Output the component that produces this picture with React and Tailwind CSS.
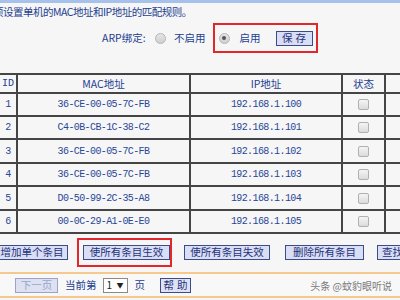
import React from "react";

const rows = [
  ["1", "36-CE-00-05-7C-FB", "192.168.1.100"],
  ["2", "C4-0B-CB-1C-38-C2", "192.168.1.101"],
  ["3", "36-CE-00-05-7C-FB", "192.168.1.102"],
  ["4", "36-CE-00-05-7C-FB", "192.168.1.103"],
  ["5", "D0-50-99-2C-35-A8", "192.168.1.104"],
  ["6", "00-0C-29-A1-0E-E0", "192.168.1.105"],
];

function Radio({ checked }) {
  return (
    <span className="w-[11px] h-[11px] rounded-full border border-[#b5b5b5] bg-gradient-to-b from-[#e6e6e6] to-[#cfcfcf] flex items-center justify-center shrink-0">
      {checked && <span className="w-[4px] h-[4px] rounded-full bg-[#555]" />}
    </span>
  );
}

function Check() {
  return <span className="w-[11px] h-[11px] rounded-[2px] border border-[#b0b0b0] bg-gradient-to-b from-[#f4f4f4] to-[#dcdcdc]" />;
}

function Btn({ children, className = "" }) {
  return (
    <div className={"h-[15px] flex items-center justify-center border border-[#3b4c86] bg-[#d9ddf6] text-[#1f3478] leading-none whitespace-nowrap shrink-0 " + className}>
      {children}
    </div>
  );
}

const mono = "font-['Liberation_Mono','Noto_Sans_CJK_SC',monospace] text-[10px] tracking-[-0.6px] text-[#2a4796]";

export default function App() {
  return (
    <div className="w-[400px] h-[300px] overflow-hidden bg-[#f6f6f6] font-['Noto_Sans_CJK_SC',sans-serif] text-[10.5px] text-[#23408f] flex flex-col">
      <div className="h-[3px] bg-[#a7c2ea] shrink-0" />
      <div className="h-[17px] flex items-center ml-[-7px] whitespace-nowrap tracking-[-0.5px] shrink-0">
        项设置单机的MAC地址和IP地址的匹配规则。
      </div>
      <div className="h-[30px] mt-[3px] flex items-center shrink-0">
        <span className="ml-[102px] w-[53px]">ARP绑定:</span>
        <Radio />
        <span className="ml-[8px]">不启用</span>
        <div className="ml-[7px] w-[105px] h-[30px] border-2 border-[#e2262b] flex items-center pl-[4px]">
          <Radio checked />
          <span className="ml-[10px]">启用</span>
          <Btn className="ml-[15px] w-[37px] bg-[#cbd3f4] tracking-[3px] pl-[3px]">保存</Btn>
        </div>
      </div>
      <div className="mt-[20px] ml-[-2px] w-[440px] bg-[#454545] p-[2px] grid grid-cols-[16px_171px_150px_41px_60px] grid-rows-[17px_21px_21px_22px_21px_22px_21px] gap-[2px] shrink-0">
        <div className="bg-[#f6f6f6] flex items-center justify-center font-['Liberation_Mono',monospace] text-[10px]">ID</div>
        <div className="bg-[#f6f6f6] flex items-center justify-center">MAC地址</div>
        <div className="bg-[#f6f6f6] flex items-center justify-center">IP地址</div>
        <div className="bg-[#f6f6f6] flex items-center justify-center">状态</div>
        <div className="bg-[#f6f6f6]" />
        {rows.map(([id, mac, ip]) => (
          <React.Fragment key={id}>
            <div className={"bg-[#f6f6f6] flex items-center justify-center " + mono}>{id}</div>
            <div className={"bg-[#f6f6f6] flex items-center justify-center " + mono}>{mac}</div>
            <div className={"bg-[#f6f6f6] flex items-center justify-center " + mono}>{ip}</div>
            <div className="bg-[#f6f6f6] flex items-center justify-center"><Check /></div>
            <div className="bg-[#f6f6f6]" />
          </React.Fragment>
        ))}
      </div>
      <div className="h-[29px] mt-[4px] flex items-center shrink-0">
        <Btn className="ml-[-10px] w-[78px] pl-[6px]">增加单个条目</Btn>
        <div className="ml-[9px] w-[98px] h-[29px] border-2 border-[#e2262b] flex items-center pl-[4px]">
          <Btn className="w-[87px]">使所有条目生效</Btn>
        </div>
        <Btn className="ml-[12px] w-[86px]">使所有条目失效</Btn>
        <Btn className="ml-[15px] w-[79px]">删除所有条目</Btn>
        <Btn className="ml-[13px] w-[40px] justify-start pl-[4px]">查找</Btn>
      </div>
      <div className="mt-[5px] h-[26px] border-t-2 border-b-2 border-[#f6c88c] bg-[#f8f8f8] flex items-center shrink-0">
        <div className="ml-[15px] w-[43px] h-[15px] flex items-center justify-center border border-[#9aa4c8] bg-[#dde1f2] text-[#9aa6c8] leading-none">下一页</div>
        <span className="ml-[7px]">当前第</span>
        <div className="ml-[6px] w-[25px] h-[15px] border border-[#8a8a8a] bg-white flex items-center justify-between px-[3px] text-[10px] text-[#222] leading-none">
          <span>1</span>
          <span className="text-[7px]">▼</span>
        </div>
        <span className="ml-[7px]">页</span>
        <Btn className="ml-[15px] w-[31px] tracking-[3px] pl-[3px] bg-[#dfe2f5]">帮助</Btn>
        <span className="ml-auto mr-[8px] text-[#7a7a7a] text-[10px]">头条 @蚊豹眼听说</span>
      </div>
    </div>
  );
}
